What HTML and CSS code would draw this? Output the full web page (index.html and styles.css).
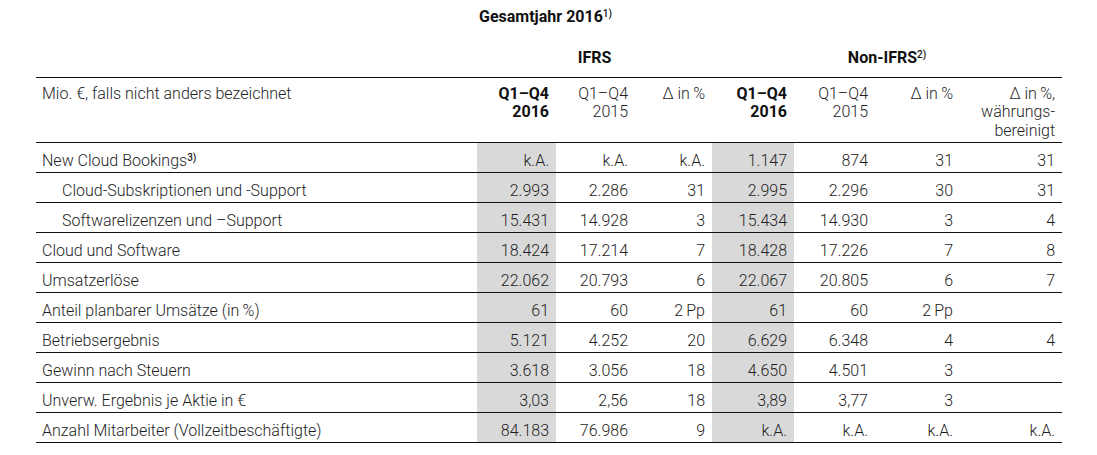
FILE: index.html
```html
<!DOCTYPE html>
<html lang="de">
<head>
<meta charset="utf-8">
<title>Gesamtjahr 2016</title>
<link rel="stylesheet" href="styles.css">
</head>
<body>
<table class="kpi">
  <colgroup>
    <col class="c-label">
    <col class="c-a">
    <col class="c-b">
    <col class="c-c">
    <col class="c-d">
    <col class="c-e">
    <col class="c-f">
    <col class="c-g">
  </colgroup>
  <thead>
    <tr class="r-year">
      <th></th>
      <th colspan="7" class="year">Gesamtjahr 2016<sup>1)</sup></th>
    </tr>
    <tr class="r-group">
      <th></th>
      <th colspan="3" class="group">IFRS</th>
      <th colspan="4" class="group">Non-IFRS<sup>2)</sup></th>
    </tr>
    <tr class="r-head">
      <th class="label">Mio. €, falls nicht anders bezeichnet</th>
      <th class="strong">Q1–Q4<br>2016</th>
      <th>Q1–Q4<br>2015</th>
      <th>Δ in&#8201;%</th>
      <th class="strong">Q1–Q4<br>2016</th>
      <th>Q1–Q4<br>2015</th>
      <th>Δ in&#8201;%</th>
      <th>Δ in&#8201;%,<br>währungs-<br>bereinigt</th>
    </tr>
  </thead>
  <tbody>
    <tr><td class="label">New Cloud Bookings<sup>3)</sup></td><td class="hl">k.A.</td><td>k.A.</td><td>k.A.</td><td class="hl">1.147</td><td>874</td><td>31</td><td>31</td></tr>
    <tr><td class="label sub">Cloud-Subskriptionen und -Support</td><td class="hl">2.993</td><td>2.286</td><td>31</td><td class="hl">2.995</td><td>2.296</td><td>30</td><td>31</td></tr>
    <tr><td class="label sub">Softwarelizenzen und –Support</td><td class="hl">15.431</td><td>14.928</td><td>3</td><td class="hl">15.434</td><td>14.930</td><td>3</td><td>4</td></tr>
    <tr><td class="label">Cloud und Software</td><td class="hl">18.424</td><td>17.214</td><td>7</td><td class="hl">18.428</td><td>17.226</td><td>7</td><td>8</td></tr>
    <tr><td class="label">Umsatzerlöse</td><td class="hl">22.062</td><td>20.793</td><td>6</td><td class="hl">22.067</td><td>20.805</td><td>6</td><td>7</td></tr>
    <tr><td class="label">Anteil planbarer Umsätze (in&#8201;%)</td><td class="hl">61</td><td>60</td><td>2&#8201;Pp</td><td class="hl">61</td><td>60</td><td>2&#8201;Pp</td><td></td></tr>
    <tr><td class="label">Betriebsergebnis</td><td class="hl">5.121</td><td>4.252</td><td>20</td><td class="hl">6.629</td><td>6.348</td><td>4</td><td>4</td></tr>
    <tr><td class="label">Gewinn nach Steuern</td><td class="hl">3.618</td><td>3.056</td><td>18</td><td class="hl">4.650</td><td>4.501</td><td>3</td><td></td></tr>
    <tr><td class="label">Unverw. Ergebnis je Aktie in €</td><td class="hl">3,03</td><td>2,56</td><td>18</td><td class="hl">3,89</td><td>3,77</td><td>3</td><td></td></tr>
    <tr><td class="label">Anzahl Mitarbeiter (Vollzeitbeschäftigte)</td><td class="hl">84.183</td><td>76.986</td><td>9</td><td class="hl">k.A.</td><td>k.A.</td><td>k.A.</td><td>k.A.</td></tr>
  </tbody>
</table>
</body>
</html>
```

FILE: styles.css
```css
html, body {
  margin: 0;
  padding: 0;
  background: #ffffff;
}

body {
  padding-left: 36px;
  font-family: Roboto, "Liberation Sans", sans-serif;
  font-weight: 300;
  font-size: 16px;
  color: #1e1e1e;
}

.kpi {
  border-collapse: collapse;
  table-layout: fixed;
  width: 1026px;
}

.c-label { width: 441px; }
.c-a { width: 79px; }
.c-b { width: 79px; }
.c-c { width: 77px; }
.c-d { width: 82px; }
.c-e { width: 81px; }
.c-f { width: 85px; }
.c-g { width: 102px; }

.kpi th,
.kpi td {
  padding: 0 7px 0 0;
  text-align: right;
  vertical-align: top;
  font-weight: 300;
  line-height: 18.5px;
}

.kpi sup {
  font-size: 10px;
  line-height: 0;
  vertical-align: 5px;
  font-weight: 500;
}

.r-year th {
  height: 36px;
  padding-top: 8px;
  box-sizing: border-box;
}

.year {
  text-align: left !important;
  padding-left: 2px !important;
  font-weight: 700 !important;
  color: #111;
}

.r-group th {
  height: 41px;
  padding-top: 13px;
  box-sizing: border-box;
}

.group {
  text-align: center !important;
  padding-right: 0 !important;
  font-weight: 700 !important;
  color: #111;
}

.r-head th {
  height: 65px;
  box-sizing: border-box;
  padding-top: 7px;
  border-top: 1px solid #111;
  border-bottom: 1px solid #111;
}

.r-head th.strong {
  font-weight: 700;
  color: #111;
}

.kpi .label {
  text-align: left;
  padding-left: 6px;
}

.kpi .label.sub {
  padding-left: 26px;
}

.kpi tbody td {
  height: 30px;
  box-sizing: border-box;
  padding-top: 9px;
  border-bottom: 1px solid #111;
}

.kpi .hl {
  background: #d9d9d9;
}
```
